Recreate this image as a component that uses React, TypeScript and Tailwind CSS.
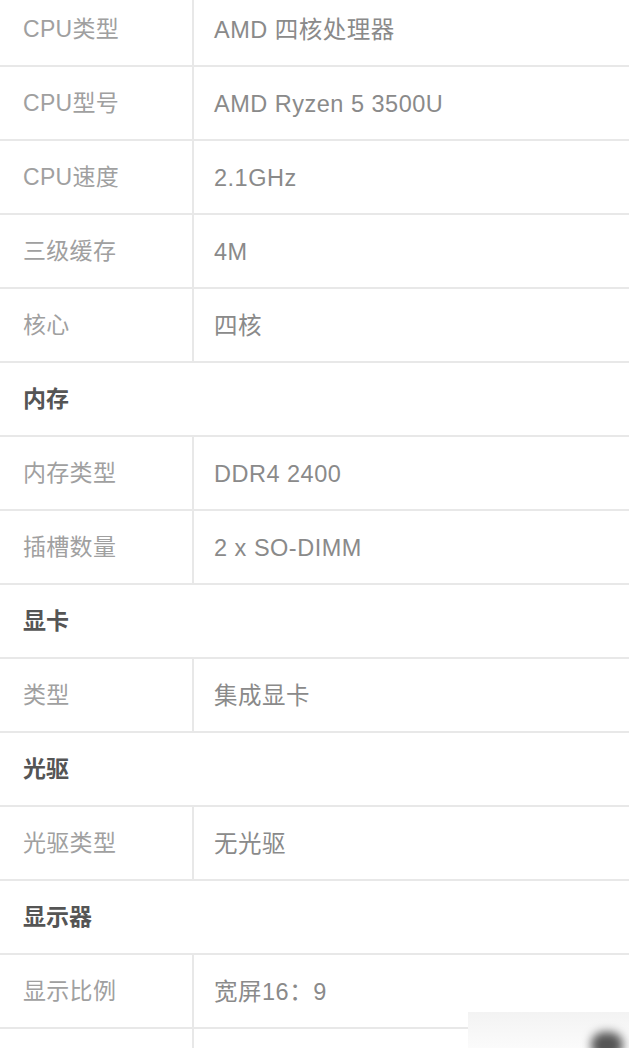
const font = { fontFamily: '"Liberation Sans", "Noto Sans CJK SC", sans-serif' };

type Row = { section: string } | { label: string; value: string };

const rows: Row[] = [
  { label: 'CPU类型', value: 'AMD 四核处理器' },
  { label: 'CPU型号', value: 'AMD Ryzen 5 3500U' },
  { label: 'CPU速度', value: '2.1GHz' },
  { label: '三级缓存', value: '4M' },
  { label: '核心', value: '四核' },
  { section: '内存' },
  { label: '内存类型', value: 'DDR4 2400' },
  { label: '插槽数量', value: '2 x SO-DIMM' },
  { section: '显卡' },
  { label: '类型', value: '集成显卡' },
  { section: '光驱' },
  { label: '光驱类型', value: '无光驱' },
  { section: '显示器' },
  { label: '显示比例', value: '宽屏16：9' },
  { label: '', value: '' },
];

export default function App() {
  return (
    <div className="relative w-[629px] h-[1048px] overflow-hidden bg-white" style={font}>
      <div className="-mt-[7px] flex flex-col">
        {rows.map((r, i) =>
          'section' in r ? (
            <div key={i} className="h-[74px] flex items-center px-[23px] border-b-2 border-[#e8e8e8]">
              <span className="text-[23px] font-bold text-[#555] leading-none">{r.section}</span>
            </div>
          ) : (
            <div key={i} className="h-[74px] flex border-b-2 border-[#e8e8e8]">
              <div className="w-[194px] flex items-center pl-[23px] border-r-2 border-[#e8e8e8] text-[23px] leading-none tracking-[0.3px] text-[#a0a0a0]">
                {r.label}
              </div>
              <div className="flex-1 flex items-center pl-[20px] pt-[3px] text-[23.5px] leading-none tracking-[0.5px] text-[#8a8a8a]">{r.value}</div>
            </div>
          )
        )}
      </div>
      <div className="absolute right-0 bottom-0 w-[161px] h-[36px] bg-gradient-to-b from-[#f3f3f3] to-[#fbfbfb]">
        <div className="absolute right-[6px] bottom-[-10px] w-[32px] h-[26px] rounded-full bg-[#555] blur-[5px]" />
      </div>
    </div>
  );
}
